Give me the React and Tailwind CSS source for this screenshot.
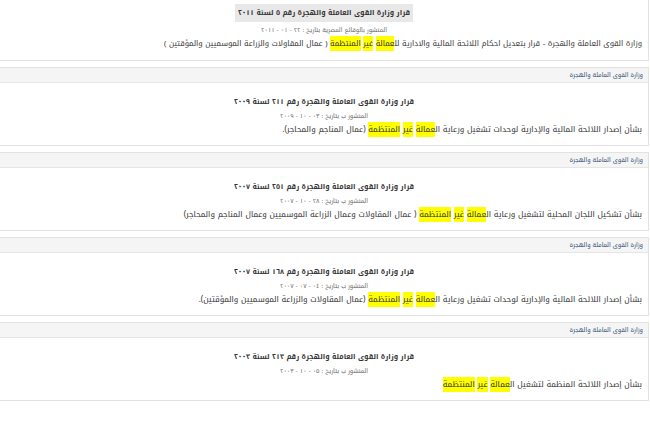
import React from 'react';

const font = {
  fontFamily: '"Noto Kufi Arabic", "Droid Arabic Kufi", "Noto Sans Arabic", "DejaVu Sans", "Noto Sans", sans-serif',
};

const Hl = ({ children }) => <span className="bg-[#ffff00]">{children}</span>;

const items = [
  {
    title: 'قرار وزارة القوى العاملة والهجرة رقم ٢١١ لسنة ٢٠٠٩',
    date: '٠٣ - ١٠ - ٢٠٠٩',
    before: 'بشأن إصدار اللائحة المالية والإدارية لوحدات تشغيل ورعاية ',
    after: ' (عمال المناجم والمحاجر).',
  },
  {
    title: 'قرار وزارة القوى العاملة والهجرة رقم ٢٥١ لسنة ٢٠٠٧',
    date: '٢٨ - ١٠ - ٢٠٠٧',
    before: 'بشأن تشكيل اللجان المحلية لتشغيل ورعاية ',
    after: ' ( عمال المقاولات وعمال الزراعة الموسميين وعمال المناجم والمحاجر)',
  },
  {
    title: 'قرار وزارة القوى العاملة والهجرة رقم ١٦٨ لسنة ٢٠٠٧',
    date: '٠٤ - ٠٧ - ٢٠٠٧',
    before: 'بشأن إصدار اللائحة المالية والإدارية لوحدات تشغيل ورعاية ',
    after: ' (عمال المقاولات والزراعة الموسميين والمؤقتين).',
  },
  {
    title: 'قرار وزارة القوى العاملة والهجرة رقم ٢١٣ لسنة ٢٠٠٣',
    date: '٠٥ - ١٠ - ٢٠٠٣',
    before: 'بشأن إصدار اللائحة المنظمة لتشغيل ',
    after: '',
  },
];

const Match = ({ prefix = 'ال' }) => (
  <>
    {prefix}
    <Hl>عمالة</Hl> <Hl>غير</Hl> <Hl>المنتظمة</Hl>
  </>
);

const Card = ({ item }) => (
  <div className="border border-[#e2e2e2] bg-white">
    <div className="h-[15px] border-b border-[#e6e6e6] bg-[#f5f5f5] px-[5px] text-[6px] leading-[15px] text-[#2b4a6f]">
      وزارة القوى العاملة والهجرة
    </div>
    <div className="px-[6px] pt-[12px] pb-[8px]">
      <div className="text-center text-[7px] font-bold leading-[14px] text-[#333]">{item.title}</div>
      <div className="text-center text-[6px] leading-[14px] text-[#666]">
        المنشور ب بتاريخ : {item.date}
      </div>
      <div className="text-right text-[8px] leading-[14px] text-[#333]">
        {item.before}
        <Match />
        {item.after}
      </div>
    </div>
  </div>
);

export default function App() {
  return (
    <div dir="rtl" className="min-h-screen bg-white pr-[1px]" style={font}>
      <div className="-ml-px flex flex-col gap-[6px]">
        {/* first result, cut off at the top */}
        <div className="border border-t-0 border-[#e2e2e2] bg-white px-[6px] pt-[4px] pb-[9px]">
          <div className="mx-auto w-fit bg-[#e8e8e8] px-[3px] py-[2px] text-[7px] font-bold leading-[14px] text-[#333]">
            قرار وزارة القوى العاملة والهجرة رقم ٥ لسنة ٢٠١١
          </div>
          <div className="mt-[1px] text-center text-[6px] leading-[14px] text-[#666]">
            المنشور بالوقائع المصرية بتاريخ : ٢٢ - ٠١ - ٢٠١١
          </div>
          <div className="text-right text-[7.7px] leading-[14px] text-[#333]">
            وزارة القوى العاملة والهجرة - قرار بتعديل احكام اللائحة المالية والادارية <Match prefix="لل" /> ( عمال
            المقاولات والزراعة الموسميين والمؤقتين )
          </div>
        </div>
        {items.map((item, i) => (
          <Card key={i} item={item} />
        ))}
      </div>
    </div>
  );
}
